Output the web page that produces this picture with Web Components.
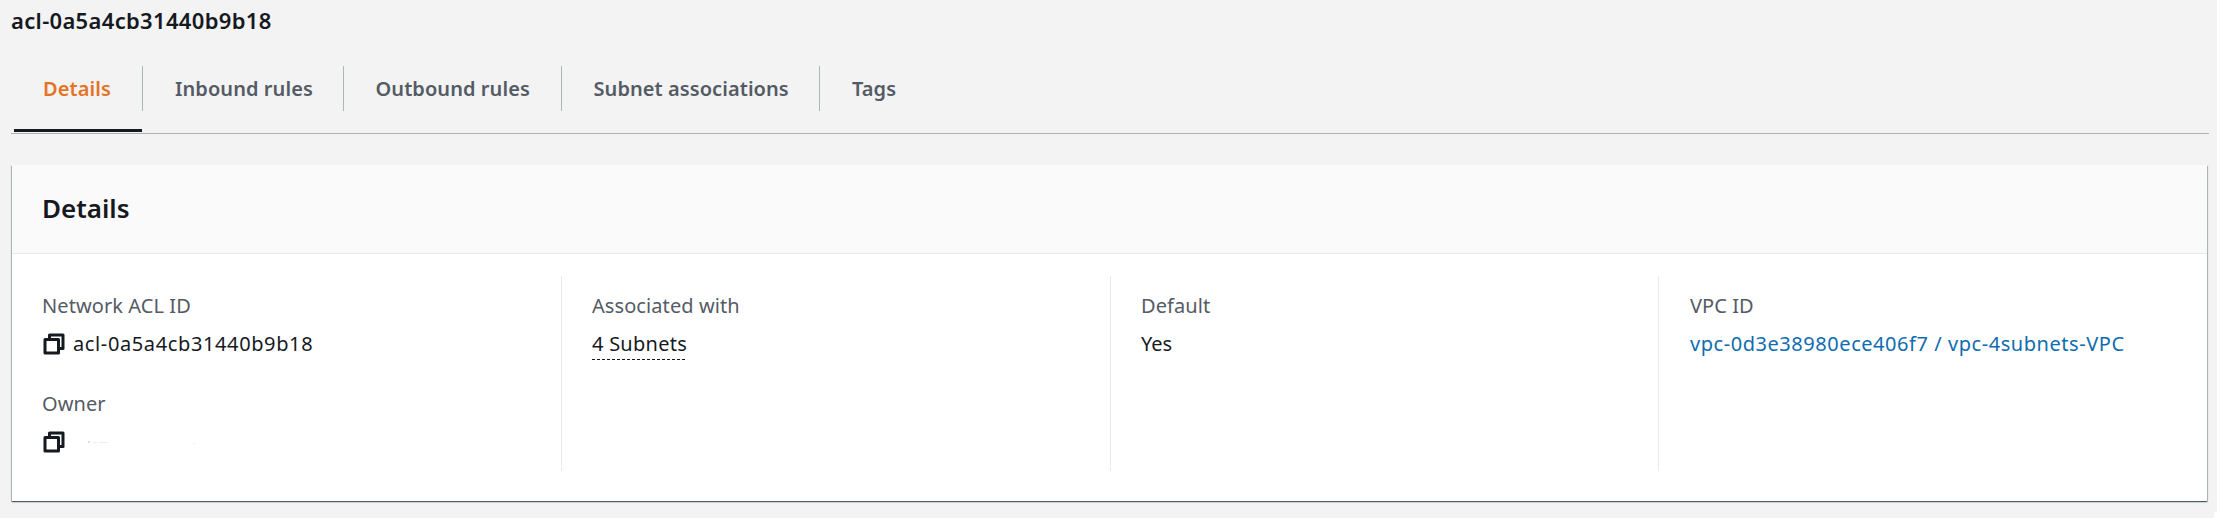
<!DOCTYPE html>
<html lang="en">
<head>
<meta charset="utf-8">
<title>Network ACL</title>
<style>
html, body { margin: 0; height: 100%; }
body { background: #fff; font-family: "Noto Sans", "Open Sans", sans-serif; font-size: 20px; color: #16191f; overflow: hidden; }
</style>
</head>
<body>
<acl-page>
  <span slot="title">acl-0a5a4cb31440b9b18</span>
  <acl-tabs slot="tabs">
    <acl-tab active style="width:129px;--pad:29px">Details</acl-tab>
    <acl-tab style="width:201px;--pad:32px">Inbound rules</acl-tab>
    <acl-tab style="width:218px;--pad:31.5px">Outbound rules</acl-tab>
    <acl-tab style="width:258px;--pad:31.500px">Subnet associations</acl-tab>
    <acl-tab last style="--pad:32px">Tags</acl-tab>
  </acl-tabs>
  <acl-card>
    <span slot="heading">Details</span>
    <acl-column first>
      <acl-field copy spaced label="Network ACL ID">acl-0a5a4cb31440b9b18</acl-field>
      <acl-field copy label="Owner"><acl-redacted></acl-redacted></acl-field>
    </acl-column>
    <acl-column><acl-field dashed label="Associated with">4 Subnets</acl-field></acl-column>
    <acl-column><acl-field label="Default">Yes</acl-field></acl-column>
    <acl-column last><acl-field link label="VPC ID">vpc-0d3e38980ece406f7 / vpc-4subnets-VPC</acl-field></acl-column>
  </acl-card>
</acl-page>
<script>
const define = (name, html) => customElements.define(name, class extends HTMLElement {
  constructor() {
    super();
    this.attachShadow({ mode: 'open' }).innerHTML = typeof html === 'function' ? html(this) : html;
  }
});

define('acl-page', `<style>
  :host { display: block; box-sizing: border-box; width: 2217px; height: 518px; padding: 0 8px 0 11px;
    background: linear-gradient(#fff, #fff) right bottom / 3px 6px no-repeat #f3f3f3; }
  h1 { margin: 0; height: 66px; font-size: 22px; font-weight: 600; line-height: 41px; letter-spacing: .33px; }
</style><h1><slot name="title"></slot></h1><slot name="tabs"></slot><slot></slot>`);

define('acl-tabs', `<style>
  :host { display: flex; box-sizing: border-box; height: 68px; padding-left: 3px; border-bottom: 1px solid #aeb1b3; margin-bottom: 31px; }
</style><slot></slot>`);

define('acl-tab', `<style>
  :host { display: block; height: 66px; box-sizing: border-box; color: #545b64; font-weight: 600; letter-spacing: .07px; white-space: nowrap; }
  span { display: block; height: 45px; line-height: 46px; padding-left: var(--pad); border-right: 1px solid #aab7b8; }
  :host([active]) { color: #e47326; }
  :host([active])::after { content: ""; display: block; width: 128px; height: 3px; margin-top: 18px; background: #16191f; }
  :host([last]) span { border: 0; }
</style><span><slot></slot></span>`);

define('acl-card', `<style>
  :host { display: block; width: 2195px; height: 336px; margin-left: 1px; background: #fff;
    box-shadow: 0 1px 1px 0 rgba(0,28,36,.5), 1px 1px 1px 0 rgba(0,28,36,.22), -1px 1px 1px 0 rgba(0,28,36,.22); }
  header { box-sizing: border-box; height: 89px; padding: 25px 0 0 30px; background: #fafafa; border-bottom: 1px solid #e6e8e9; }
  h2 { margin: 0; font-size: 26px; line-height: 36px; font-weight: 600; }
  main { display: grid; grid-template-columns: 549px 549px 548px 549px; padding-top: 22px; height: 195px; }
</style><header><h2><slot name="heading"></slot></h2></header><main><slot></slot></main>`);

define('acl-column', `<style>
  :host { display: block; box-sizing: border-box; padding: 15px 0 0 30px; border-left: 1px solid #e8ebeb; }
  :host([first]) { border-left: 0; }
  :host([last]) { padding-left: 31px; }
</style><slot></slot>`);

define('acl-redacted', `<style>:host { display: block; width: 140px; height: 30px; } svg { display: block; }</style>
<svg width="140" height="30"><path d="M15 15h2" stroke="#bbb"/><path d="M20 15.5h4M26 15.5h9M120 16.5h2" stroke="#eee"/></svg>`);

define('acl-field', host => `<style>
  :host { display: block; line-height: 30px; }
  :host([spaced]) { margin-bottom: 30px; }
  label { display: block; color: #545b64; margin-bottom: 8px; letter-spacing: .08px; }
  div { display: flex; height: 30px; }
  svg { display: block; flex: none; margin: 4px 8px 0 1px; }
  :host([spaced]) div { letter-spacing: .62px; }
  :host([link]) div { color: #0f6cb0; letter-spacing: .55px; }
  :host([dashed]) div { width: 95px; height: 31px; letter-spacing: .25px;
    background: repeating-linear-gradient(90deg, #16191f 0 3px, transparent 3px 5px) left bottom / 100% 1px no-repeat; }
</style><label>${host.getAttribute('label')}</label><div>${host.hasAttribute('copy')
  ? '<svg width="22" height="22" viewBox="0 0 22 22" fill="none" stroke="#16191f" stroke-width="3" stroke-linejoin="round"><path d="M2 6.5h13.5v13.5H2z"/><path d="M6.5 6V2H20v13.500H16"/></svg>'
  : ''}<slot></slot></div>`);
</script>
</body>
</html>
